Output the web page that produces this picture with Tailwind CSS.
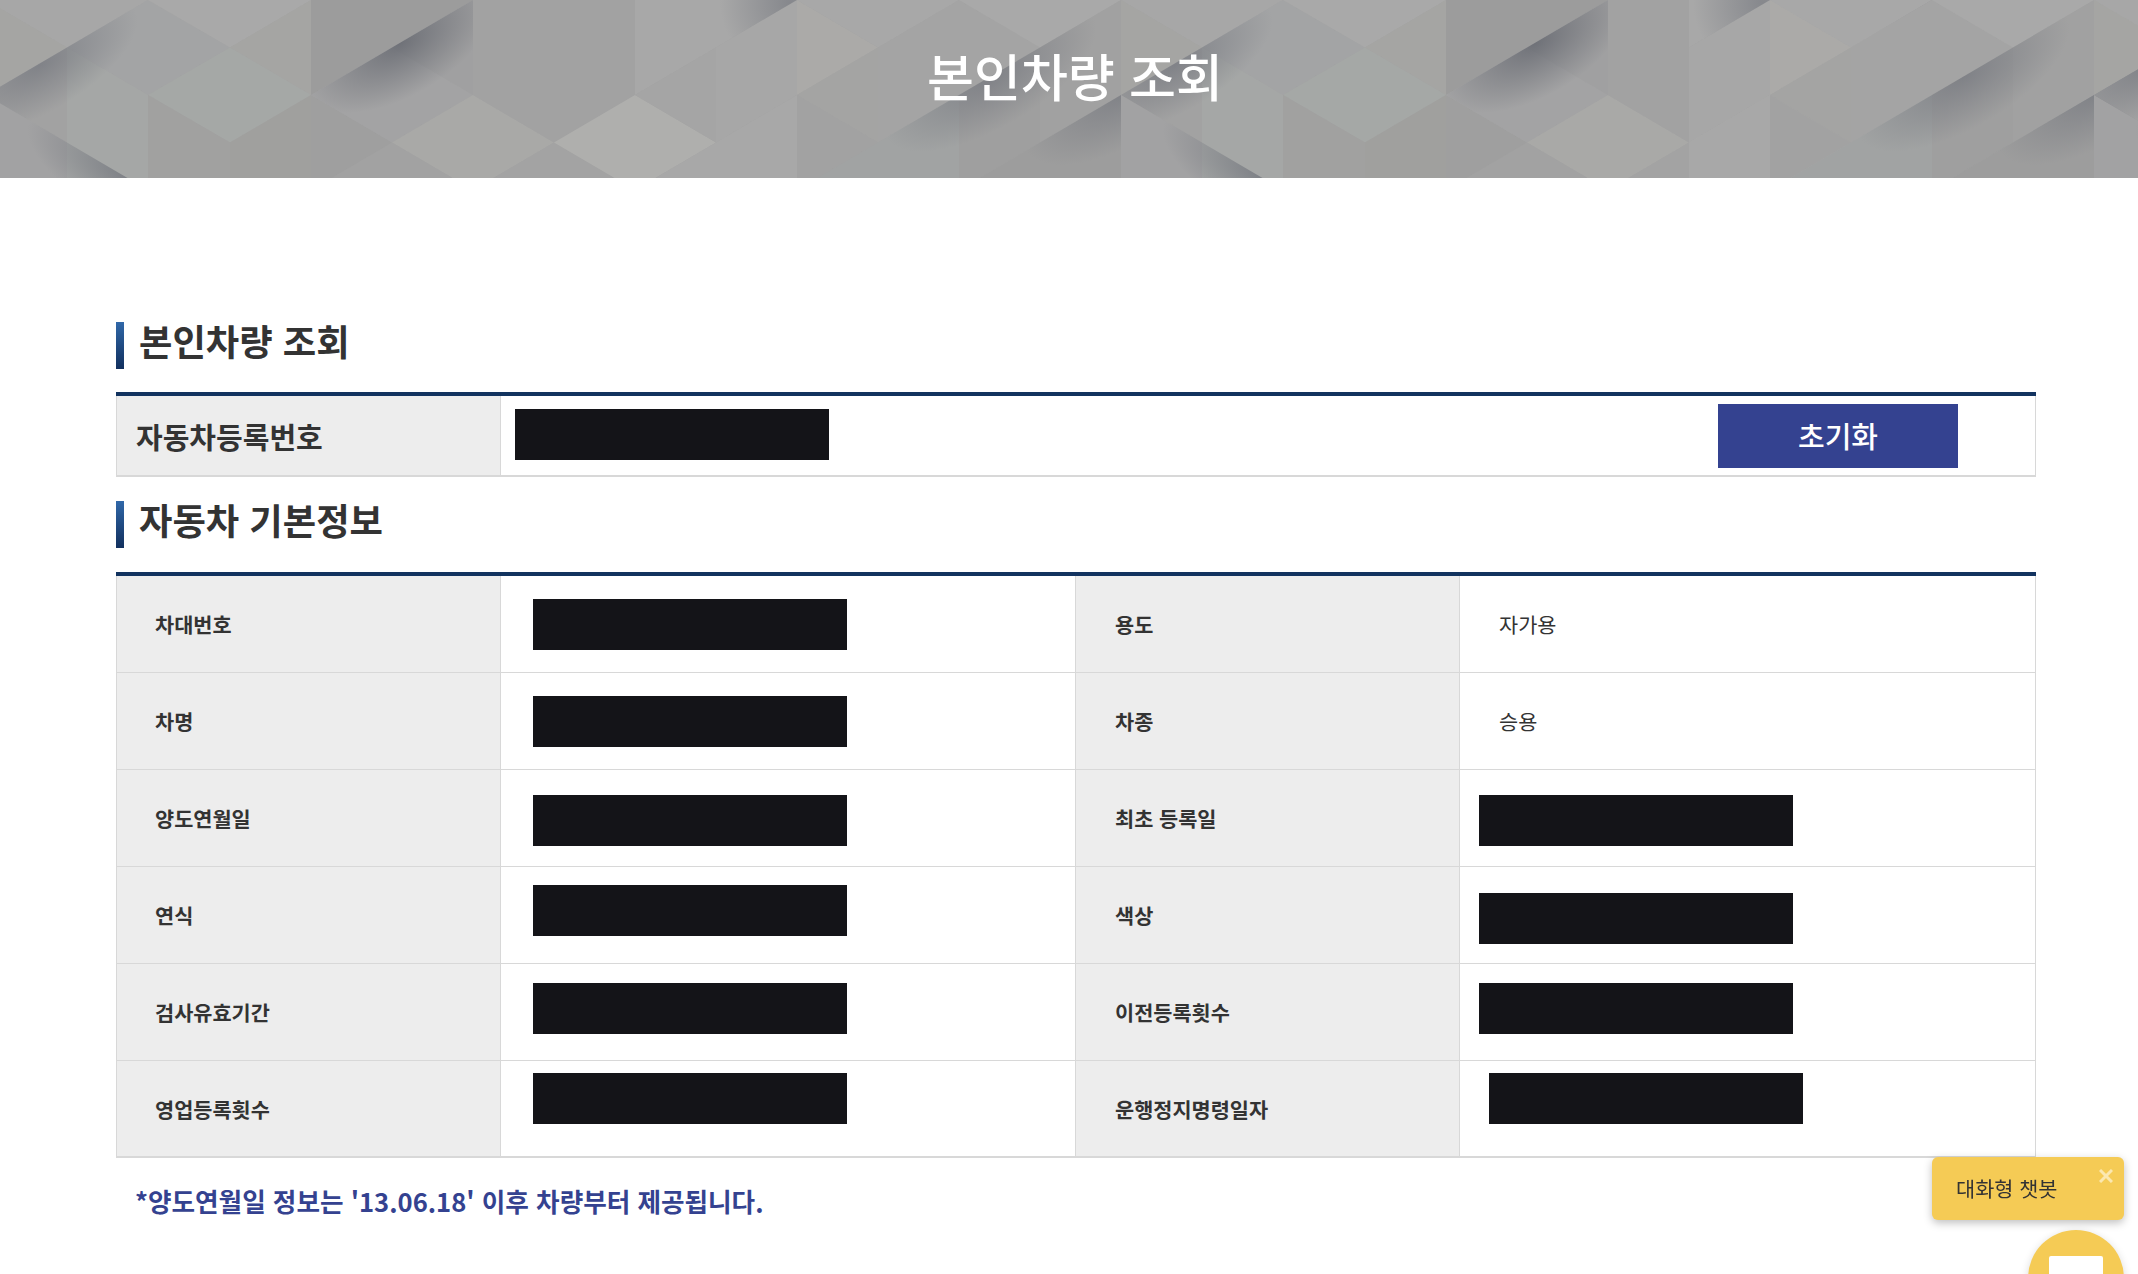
<!DOCTYPE html>
<html lang="ko">
<head>
  <meta charset="UTF-8" />
  <title>본인차량 조회</title>
  <script src="https://cdn.jsdelivr.net/npm/@tailwindcss/browser@4"></script>
</head>
<body class="h-screen overflow-hidden bg-white font-['Noto_Sans_CJK_KR','Noto_Sans',sans-serif] text-[#333]">
  <!-- page banner -->
  <header class="relative h-[178px] overflow-hidden bg-[#a3a3a3] flex items-center justify-center pl-[12px] pb-[28px]">
    <svg class="absolute inset-0" width="2138" height="178" viewBox="0 0 2138 178">
      <defs>
        <!-- shadows are ellipses stretched along the crease -->
        <radialGradient id="s1" gradientUnits="userSpaceOnUse" cx="0" cy="0" r="110" gradientTransform="translate(40 65) rotate(-30.4) scale(1 .42)">
          <stop offset="0" stop-color="#6f727a" stop-opacity=".65"/><stop offset="1" stop-color="#6f727a" stop-opacity="0"/>
        </radialGradient>
        <radialGradient id="s2" gradientUnits="userSpaceOnUse" cx="0" cy="0" r="105" gradientTransform="translate(400 43) rotate(-30.4) scale(1 .5)">
          <stop offset="0" stop-color="#63666e" stop-opacity=".8"/><stop offset="1" stop-color="#63666e" stop-opacity="0"/>
        </radialGradient>
        <radialGradient id="s3" gradientUnits="userSpaceOnUse" cx="790" cy="3" r="70">
          <stop offset="0" stop-color="#6f727a" stop-opacity=".6"/><stop offset="1" stop-color="#6f727a" stop-opacity="0"/>
        </radialGradient>
        <radialGradient id="s4" gradientUnits="userSpaceOnUse" cx="0" cy="0" r="120" gradientTransform="translate(990 77) rotate(-30.4) scale(1 .42)">
          <stop offset="0" stop-color="#6f727a" stop-opacity=".65"/><stop offset="1" stop-color="#6f727a" stop-opacity="0"/>
        </radialGradient>
        <radialGradient id="s5" gradientUnits="userSpaceOnUse" cx="0" cy="0" r="110" gradientTransform="translate(1121 95) rotate(-30.4) scale(1 .45)">
          <stop offset="0" stop-color="#6f727a" stop-opacity=".6"/><stop offset="1" stop-color="#6f727a" stop-opacity="0"/>
        </radialGradient>
        <radialGradient id="s6" gradientUnits="userSpaceOnUse" cx="0" cy="0" r="110" gradientTransform="translate(125 176) rotate(30.4) scale(1 .4)">
          <stop offset="0" stop-color="#6f727a" stop-opacity=".7"/><stop offset="1" stop-color="#6f727a" stop-opacity="0"/>
        </radialGradient>
        <clipPath id="right-part"><rect x="1689" y="0" width="449" height="178"/></clipPath>
        <g id="tile">
          <polygon fill="#a7a7a7" points="-14,0 148,0 67,47.5"/>
          <polygon fill="#a5a5a3" points="-14,0 67,47.5 -14,95"/>
          <polygon fill="#a3a4a5" points="148,0 230,47.5 148,95 67,47.5"/>
          <polygon fill="#a9a9a9" points="148,0 311,0 230,47.5"/>
          <polygon fill="#a5a5a3" points="230,47.5 311,0 311,95"/>
          <polygon fill="#a5a8a6" points="230,47.5 311,95 230,142.5 148,95"/>
          <polygon fill="#a2a2a2" points="-14,95 67,47.5 67,142.5"/>
          <polygon fill="#a2a2a3" points="-14,95 67,142.5 67,190 -14,190"/>
          <polygon fill="#a5a7a6" points="67,47.5 148,95 148,190 67,190"/>
          <polygon fill="#a1a1a0" points="148,95 230,142.5 230,190 148,190"/>
          <polygon fill="#a0a09e" points="230,142.5 311,95 311,190 230,190"/>
          <polygon fill="#9f9f9f" points="311,95 392,142.5 392,190 311,190"/>
          <polygon fill="#9c9c9c" points="311,0 473,0 392,47.5 311,95"/>
          <polygon fill="#a3a3a4" points="392,47.5 473,95 392,142.5 311,95"/>
          <polygon fill="#a0a0a1" points="392,47.5 473,0 473,95"/>
          <polygon fill="#a9a9a7" points="392,142.5 473,95 554,142.5 473,190"/>
          <polygon fill="#a2a2a2" points="311,190 392,142.5 473,190"/>
          <polygon fill="#a2a2a2" points="473,0 635,0 635,95 554,142.5 473,95"/>
          <polygon fill="#a3a3a3" points="473,190 554,142.5 635,190"/>
          <polygon fill="#a8a8a8" points="635,0 716,0 716,47.5 635,95"/>
          <polygon fill="#afafad" points="635,95 716,142.5 635,190 554,142.5"/>
          <polygon fill="#a8a8a8" points="716,0 797,0 716,47.5"/>
          <polygon fill="#a5a5a5" points="716,47.5 716,142.5 635,95"/>
          <polygon fill="#a7a7a7" points="716,47.5 797,0 797,95 716,142.5"/>
          <polygon fill="#a8a8a8" points="635,190 716,142.5 797,95 797,190"/>
          <polygon fill="#abaaa8" points="797,0 878,47.5 797,95"/>
          <polygon fill="#a8a8a8" points="797,0 959,0 878,47.5"/>
          <polygon fill="#a4a4a3" points="797,95 878,47.5 878,142.5"/>
          <polygon fill="#a2a2a2" points="797,95 878,142.5 797,190"/>
          <polygon fill="#a4a4a4" points="878,47.5 959,0 1040,47.5 959,95 878,142.5"/>
          <polygon fill="#a9a9a9" points="959,0 1121,0 1040,47.5"/>
          <polygon fill="#a1a3a3" points="797,190 878,142.5 959,95 959,190"/>
          <polygon fill="#9f9f9f" points="959,95 1040,47.5 1040,142.5 959,190"/>
          <polygon fill="#a1a1a1" points="1040,47.5 1121,0 1121,95 1040,142.5"/>
          <polygon fill="#9d9d9d" points="959,190 1040,142.5 1121,95 1121,190"/>
          <!-- creases -->
          <polygon fill="url(#s1)" points="-14,95 67,47.5 148,0 230,47.5 148,95 67,142.5"/>
          <polygon fill="url(#s2)" points="311,95 392,47.5 473,0 473,95 392,142.5"/>
          <polygon fill="url(#s3)" points="716,0 797,0 716,47.5"/>
          <polygon fill="url(#s4)" points="878,142.5 959,95 1040,47.5 1121,0 1121,95 1040,142.5 959,190"/>
          <polygon fill="url(#s5)" points="959,190 1040,142.5 1121,95 1121,190"/>
          <polygon fill="url(#s6)" points="-14,95 67,142.5 148,190 -14,190"/>
        </g>
      </defs>
      <use href="#tile"/>
      <use href="#tile" x="1135"/>
      <g clip-path="url(#right-part)">
        <use href="#tile" x="973"/>
        <use href="#tile" x="2108"/>
      </g>
    </svg>
    <h1 class="relative text-[51px] leading-none font-medium text-white">본인차량 조회</h1>
  </header>

  <main class="ml-[116px] w-[1920px]">
    <section class="mt-[144px]">
      <div class="flex items-center gap-[15px] h-[47px]">
        <span class="h-full w-[8px] bg-gradient-to-b from-[#3068a9] to-[#12305e]"></span>
        <h2 class="text-[36.3px] font-bold leading-none pb-[10px]">본인차량 조회</h2>
      </div>
      <div class="mt-[23px] h-[85px] border-t-4 border-[#12335f] flex">
        <div class="w-[385px] bg-[#ededed] border-l border-r border-b-2 border-[#d8d8d8] pl-[19px] pt-[2px] flex items-center text-[29px] font-bold">자동차등록번호</div>
        <div class="flex-1 border-r border-b-2 border-[#d8d8d8] pl-[14px] pr-[77px] flex items-start justify-between">
          <div class="mt-[13px] w-[314px] h-[51px] bg-[#141418]"></div>
          <button class="mt-[8px] w-[240px] h-[64px] bg-[#344290] text-white text-[29px] font-medium">초기화</button>
        </div>
      </div>
    </section>

    <section class="mt-[24px]">
      <div class="flex items-center gap-[15px] h-[47px]">
        <span class="h-full w-[8px] bg-gradient-to-b from-[#3068a9] to-[#12305e]"></span>
        <h2 class="text-[36.3px] font-bold leading-none pb-[10px]">자동차 기본정보</h2>
      </div>
      <div class="mt-[24px] border-t-4 border-[#12335f] grid grid-cols-[385px_574px_385px_576px] text-[20.8px]">
        <div class="h-[97px] bg-[#ededed] border-l border-r border-b border-[#d8d8d8] pl-[38px] pt-[1px] flex items-center font-bold">차대번호</div>
        <div class="h-[97px] border-b border-[#d8d8d8] pl-[32px]"><div class="mt-[23px] w-[314px] h-[51px] bg-[#141418]"></div></div>
        <div class="h-[97px] bg-[#ededed] border-l border-r border-b border-[#d8d8d8] pl-[39px] pt-[1px] flex items-center font-bold">용도</div>
        <div class="h-[97px] border-r border-b border-[#d8d8d8] pl-[39px] pt-[1px] flex items-center">자가용</div>

        <div class="h-[97px] bg-[#ededed] border-l border-r border-b border-[#d8d8d8] pl-[38px] pt-[2px] flex items-center font-bold">차명</div>
        <div class="h-[97px] border-b border-[#d8d8d8] pl-[32px]"><div class="mt-[23px] w-[314px] h-[51px] bg-[#141418]"></div></div>
        <div class="h-[97px] bg-[#ededed] border-l border-r border-b border-[#d8d8d8] pl-[39px] pt-[2px] flex items-center font-bold">차종</div>
        <div class="h-[97px] border-r border-b border-[#d8d8d8] pl-[39px] pt-[2px] flex items-center">승용</div>

        <div class="h-[97px] bg-[#ededed] border-l border-r border-b border-[#d8d8d8] pl-[38px] pt-[1px] flex items-center font-bold">양도연월일</div>
        <div class="h-[97px] border-b border-[#d8d8d8] pl-[32px]"><div class="mt-[25px] w-[314px] h-[51px] bg-[#141418]"></div></div>
        <div class="h-[97px] bg-[#ededed] border-l border-r border-b border-[#d8d8d8] pl-[39px] pt-[1px] flex items-center font-bold">최초 등록일</div>
        <div class="h-[97px] border-r border-b border-[#d8d8d8] pl-[19px]"><div class="mt-[25px] w-[314px] h-[51px] bg-[#141418]"></div></div>

        <div class="h-[97px] bg-[#ededed] border-l border-r border-b border-[#d8d8d8] pl-[38px] pt-[2px] flex items-center font-bold">연식</div>
        <div class="h-[97px] border-b border-[#d8d8d8] pl-[32px]"><div class="mt-[18px] w-[314px] h-[51px] bg-[#141418]"></div></div>
        <div class="h-[97px] bg-[#ededed] border-l border-r border-b border-[#d8d8d8] pl-[39px] pt-[2px] flex items-center font-bold">색상</div>
        <div class="h-[97px] border-r border-b border-[#d8d8d8] pl-[19px]"><div class="mt-[26px] w-[314px] h-[51px] bg-[#141418]"></div></div>

        <div class="h-[97px] bg-[#ededed] border-l border-r border-b border-[#d8d8d8] pl-[38px] pt-[1px] flex items-center font-bold">검사유효기간</div>
        <div class="h-[97px] border-b border-[#d8d8d8] pl-[32px]"><div class="mt-[19px] w-[314px] h-[51px] bg-[#141418]"></div></div>
        <div class="h-[97px] bg-[#ededed] border-l border-r border-b border-[#d8d8d8] pl-[39px] pt-[1px] flex items-center font-bold">이전등록횟수</div>
        <div class="h-[97px] border-r border-b border-[#d8d8d8] pl-[19px]"><div class="mt-[19px] w-[314px] h-[51px] bg-[#141418]"></div></div>

        <div class="h-[97px] bg-[#ededed] border-l border-r border-b-2 border-[#d8d8d8] pl-[38px] pt-[2px] flex items-center font-bold">영업등록횟수</div>
        <div class="h-[97px] border-b-2 border-[#d8d8d8] pl-[32px]"><div class="mt-[12px] w-[314px] h-[51px] bg-[#141418]"></div></div>
        <div class="h-[97px] bg-[#ededed] border-l border-r border-b-2 border-[#d8d8d8] pl-[39px] pt-[2px] flex items-center font-bold">운행정지명령일자</div>
        <div class="h-[97px] border-r border-b-2 border-[#d8d8d8] pl-[29px]"><div class="mt-[12px] w-[314px] h-[51px] bg-[#141418]"></div></div>
      </div>
      <p class="mt-[23px] pl-[19px] text-[25.6px] leading-[40px] font-bold text-[#344290]">*양도연월일 정보는 '13.06.18' 이후 차량부터 제공됩니다.</p>
    </section>
  </main>

  <!-- chatbot widget -->
  <div class="fixed left-[1932px] top-[1157px] w-[192px] h-[63px] rounded-[6px] bg-[#f5cb55] shadow-[0_3px_8px_rgba(0,0,0,0.25)] pl-[24px] flex items-center text-[20.8px] text-[#333]">
    대화형 챗봇
    <svg class="absolute right-[11px] top-[12px]" width="14" height="14" viewBox="0 0 14 14" fill="none" stroke="#fbe8b0" stroke-width="3"><path d="M1 1l12 12M13 1L1 13"/></svg>
  </div>
  <div class="fixed left-[2028px] top-[1230px] w-[96px] h-[96px] rounded-full bg-[#f5cb55] shadow-[0_2px_8px_rgba(0,0,0,0.15)]">
    <div class="absolute left-[21px] top-[26px] w-[54px] h-[40px] rounded-[2px] bg-white"></div>
  </div>
</body>
</html>
